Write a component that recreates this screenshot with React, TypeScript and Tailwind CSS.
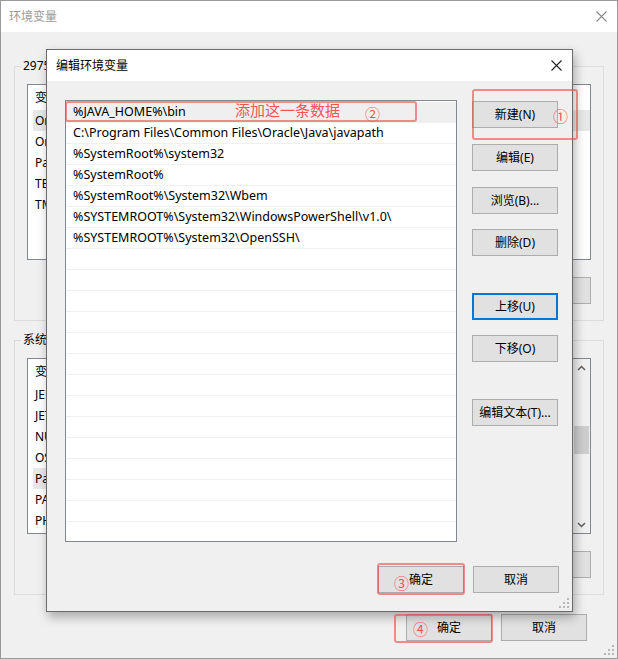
import React from "react";

const FONT = "font-['Noto_Sans','Noto_Sans_CJK_SC',sans-serif]";

function CloseX({ color }: { color: string }) {
  return (
    <svg width="11" height="11" viewBox="0 0 11 11">
      <path d="M0.5 0.5L10.5 10.5M10.5 0.5L0.5 10.5" stroke={color} strokeWidth="1.1" fill="none" />
    </svg>
  );
}

function Grip() {
  const dots = [
    [8, 0],
    [4, 4],
    [8, 4],
    [0, 8],
    [4, 8],
    [8, 8],
  ];
  return (
    <svg width="10" height="10" viewBox="0 0 10 10">
      {dots.map(([x, y], i) => (
        <rect key={i} x={x} y={y} width="2" height="2" fill="#b8b8b8" />
      ))}
    </svg>
  );
}

function Btn({
  children,
  className = "",
  focused = false,
}: {
  children: React.ReactNode;
  className?: string;
  focused?: boolean;
}) {
  return (
    <div
      className={`h-[27px] w-[86px] shrink-0 flex items-center justify-center bg-[#e1e1e1] text-[12px] text-black ${
        focused ? "border-2 border-[#0078d7]" : "border border-[#adadad]"
      } ${className}`}
    >
      {children}
    </div>
  );
}

function BgList({ rows, hl, scroll }: { rows: [string, string][]; hl: number; scroll?: boolean }) {
  return (
    <div className="h-[176px] bg-white border border-[#828790] flex overflow-hidden">
      <div className="flex-1 flex flex-col">
        <div className="h-[25px] shrink-0 flex items-center pl-[7px] text-[12px] text-black">
          <span className="w-[160px]">变量</span>
          <span>值</span>
        </div>
        {rows.map(([a, b], i) => (
          <div
            key={i}
            className={`h-[21px] shrink-0 ml-[5px] flex items-center pl-[2px] text-[12px] text-black ${
              i === hl ? "bg-[#e8e8e8]" : ""
            }`}
          >
            <span className="w-[160px]">{a}</span>
            <span>{b}</span>
          </div>
        ))}
      </div>
      {scroll && (
        <div className="w-[17px] bg-[#f0f0f0] flex flex-col items-center">
          <div className="h-[17px] flex items-center justify-center">
            <svg width="9" height="6" viewBox="0 0 9 6">
              <path d="M1 5L4.5 1.5L8 5" stroke="#606060" strokeWidth="1.5" fill="none" />
            </svg>
          </div>
          <div className="mt-[50px] h-[28px] w-[15px] bg-[#cdcdcd]" />
          <div className="flex-1" />
          <div className="h-[17px] flex items-center justify-center">
            <svg width="9" height="6" viewBox="0 0 9 6">
              <path d="M1 1L4.5 4.5L8 1" stroke="#606060" strokeWidth="1.5" fill="none" />
            </svg>
          </div>
        </div>
      )}
    </div>
  );
}

function Group({
  label,
  children,
  className = "",
}: {
  label: string;
  children: React.ReactNode;
  className?: string;
}) {
  return (
    <div className={`mx-[13px] ${className}`}>
      <div className="flex h-[16px]">
        <div className="w-[7px] h-[8px] mt-[8px] border-l border-t border-[#dcdcdc]" />
        <span className="px-[2px] text-[12px] leading-[16px] text-black whitespace-nowrap">{label}</span>
        <div className="flex-1 h-[8px] mt-[8px] border-r border-t border-[#dcdcdc]" />
      </div>
      <div className="border-x border-b border-[#dcdcdc] px-[12px] pt-[10px] pb-[16px]">{children}</div>
    </div>
  );
}

const pathRows = [
  "%JAVA_HOME%\\bin",
  "C:\\Program Files\\Common Files\\Oracle\\Java\\javapath",
  "%SystemRoot%\\system32",
  "%SystemRoot%",
  "%SystemRoot%\\System32\\Wbem",
  "%SYSTEMROOT%\\System32\\WindowsPowerShell\\v1.0\\",
  "%SYSTEMROOT%\\System32\\OpenSSH\\",
];

const RED_BORDER = "border-2 border-[rgba(238,70,70,0.6)] rounded-[3px]";
const RED_TEXT = "text-[#f25555]";

export default function App() {
  const allRows = [...pathRows, ...Array.from({ length: 15 }, () => "")];
  return (
    <div
      className={`relative w-[618px] h-[659px] bg-[#f0f0f0] border border-[#9a9a9a] overflow-hidden ${FONT}`}
    >
      {/* Background window */}
      <div className="h-[31px] bg-white flex items-center justify-between pl-[8px] pr-[10px]">
        <span className="text-[12px] text-[#9a9a9a]">环境变量</span>
        <CloseX color="#8a8a8a" />
      </div>

      <Group label="29758 的用户变量(U)" className="mt-[26px]">
        <BgList
          hl={0}
          rows={[
            ["OneDrive", "C:\\Users\\29758\\OneDrive"],
            ["OneDriveConsumer", "C:\\Users\\29758\\OneDrive"],
            ["Path", "C:\\Users\\29758\\AppData\\Local\\Microsoft\\WindowsApps;"],
            ["TEMP", "C:\\Users\\29758\\AppData\\Local\\Temp"],
            ["TMP", "C:\\Users\\29758\\AppData\\Local\\Temp"],
          ]}
        />
        <div className="mt-[17px] flex justify-end gap-[9px]">
          <Btn>新建(N)...</Btn>
          <Btn>编辑(E)...</Btn>
          <Btn>删除(D)</Btn>
        </div>
      </Group>

      <Group label="系统变量(S)" className="mt-[11px]">
        <BgList
          hl={4}
          scroll
          rows={[
            ["JENKINS_HOME", "D:\\jenkins"],
            ["JETTY_HOME", "D:\\jetty"],
            ["NUMBER_OF_PROCESSORS", "8"],
            ["OS", "Windows_NT"],
            ["Path", "%JAVA_HOME%\\bin;C:\\Program Files\\Common Files"],
            ["PATHEXT", ".COM;.EXE;.BAT;.CMD;.VBS;.VBE;.JS"],
            ["PHP_HOME", "D:\\php"],
          ]}
        />
        <div className="mt-[17px] flex justify-end gap-[9px]">
          <Btn>新建(W)...</Btn>
          <Btn>编辑(I)...</Btn>
          <Btn>删除(L)</Btn>
        </div>
      </Group>

      <div className="mt-[19px] flex justify-end gap-[9px] pr-[30px]">
        <Btn>确定</Btn>
        <Btn>取消</Btn>
      </div>
      <div className="absolute right-[3px] bottom-[3px]">
        <Grip />
      </div>

      {/* Dialog window */}
      <div className="absolute left-[45px] top-[48px] w-[527px] h-[563px] bg-[#f0f0f0] border border-[#6b6b6b] shadow-[2px_5px_10px_rgba(0,0,0,0.3)] flex flex-col">
        <div className="h-[31px] bg-white flex items-center justify-between pl-[9px] pr-[10px]">
          <span className="text-[12px] text-black">编辑环境变量</span>
          <CloseX color="#222" />
        </div>
        <div className="flex mt-[19px] pl-[18px]">
          <div className="w-[392px] h-[442px] bg-white border border-[#828790] pt-[1px] overflow-hidden">
            {allRows.map((r, i) => (
              <div
                key={i}
                className={`h-[21px] border-b border-[#f0f0f0] flex items-center pl-[7px] text-[12.5px] text-black whitespace-nowrap ${
                  i === 0 ? "bg-[#efefef]" : ""
                }`}
              >
                {r}
              </div>
            ))}
          </div>
          <div className="ml-[15px] pt-[1px] flex flex-col">
            <Btn>新建(N)</Btn>
            <Btn className="mt-[16px]">编辑(E)</Btn>
            <Btn className="mt-[16px]">浏览(B)...</Btn>
            <Btn className="mt-[15px]">删除(D)</Btn>
            <Btn className="mt-[37px]" focused>
              上移(U)
            </Btn>
            <Btn className="mt-[15px]">下移(O)</Btn>
            <Btn className="mt-[37px]">编辑文本(T)...</Btn>
          </div>
        </div>
        <div className="mt-[24px] flex justify-end gap-[9px] pr-[13px]">
          <Btn>确定</Btn>
          <Btn>取消</Btn>
        </div>
        <div className="absolute right-[3px] bottom-[3px]">
          <Grip />
        </div>
      </div>

      {/* Annotations */}
      <div className={`absolute left-[471px] top-[88px] w-[106px] h-[51px] ${RED_BORDER}`} />
      <span className={`absolute left-[552px] top-[106px] text-[15px] leading-[18px] ${RED_TEXT}`}>①</span>

      <div className={`absolute left-[64px] top-[100px] w-[352px] h-[21px] ${RED_BORDER}`} />
      <span className={`absolute left-[234px] top-[99px] text-[15px] leading-[20px] ${RED_TEXT}`}>
        添加这一条数据
      </span>
      <span className={`absolute left-[364px] top-[104px] text-[15px] leading-[18px] ${RED_TEXT}`}>②</span>

      <div className={`absolute left-[376px] top-[562px] w-[88px] h-[32px] ${RED_BORDER}`} />
      <span className={`absolute left-[393px] top-[573px] text-[15px] leading-[18px] ${RED_TEXT}`}>③</span>

      <div className={`absolute left-[393px] top-[613px] w-[99px] h-[29px] ${RED_BORDER}`} />
      <span className={`absolute left-[412px] top-[619px] text-[15px] leading-[18px] ${RED_TEXT}`}>④</span>
    </div>
  );
}
